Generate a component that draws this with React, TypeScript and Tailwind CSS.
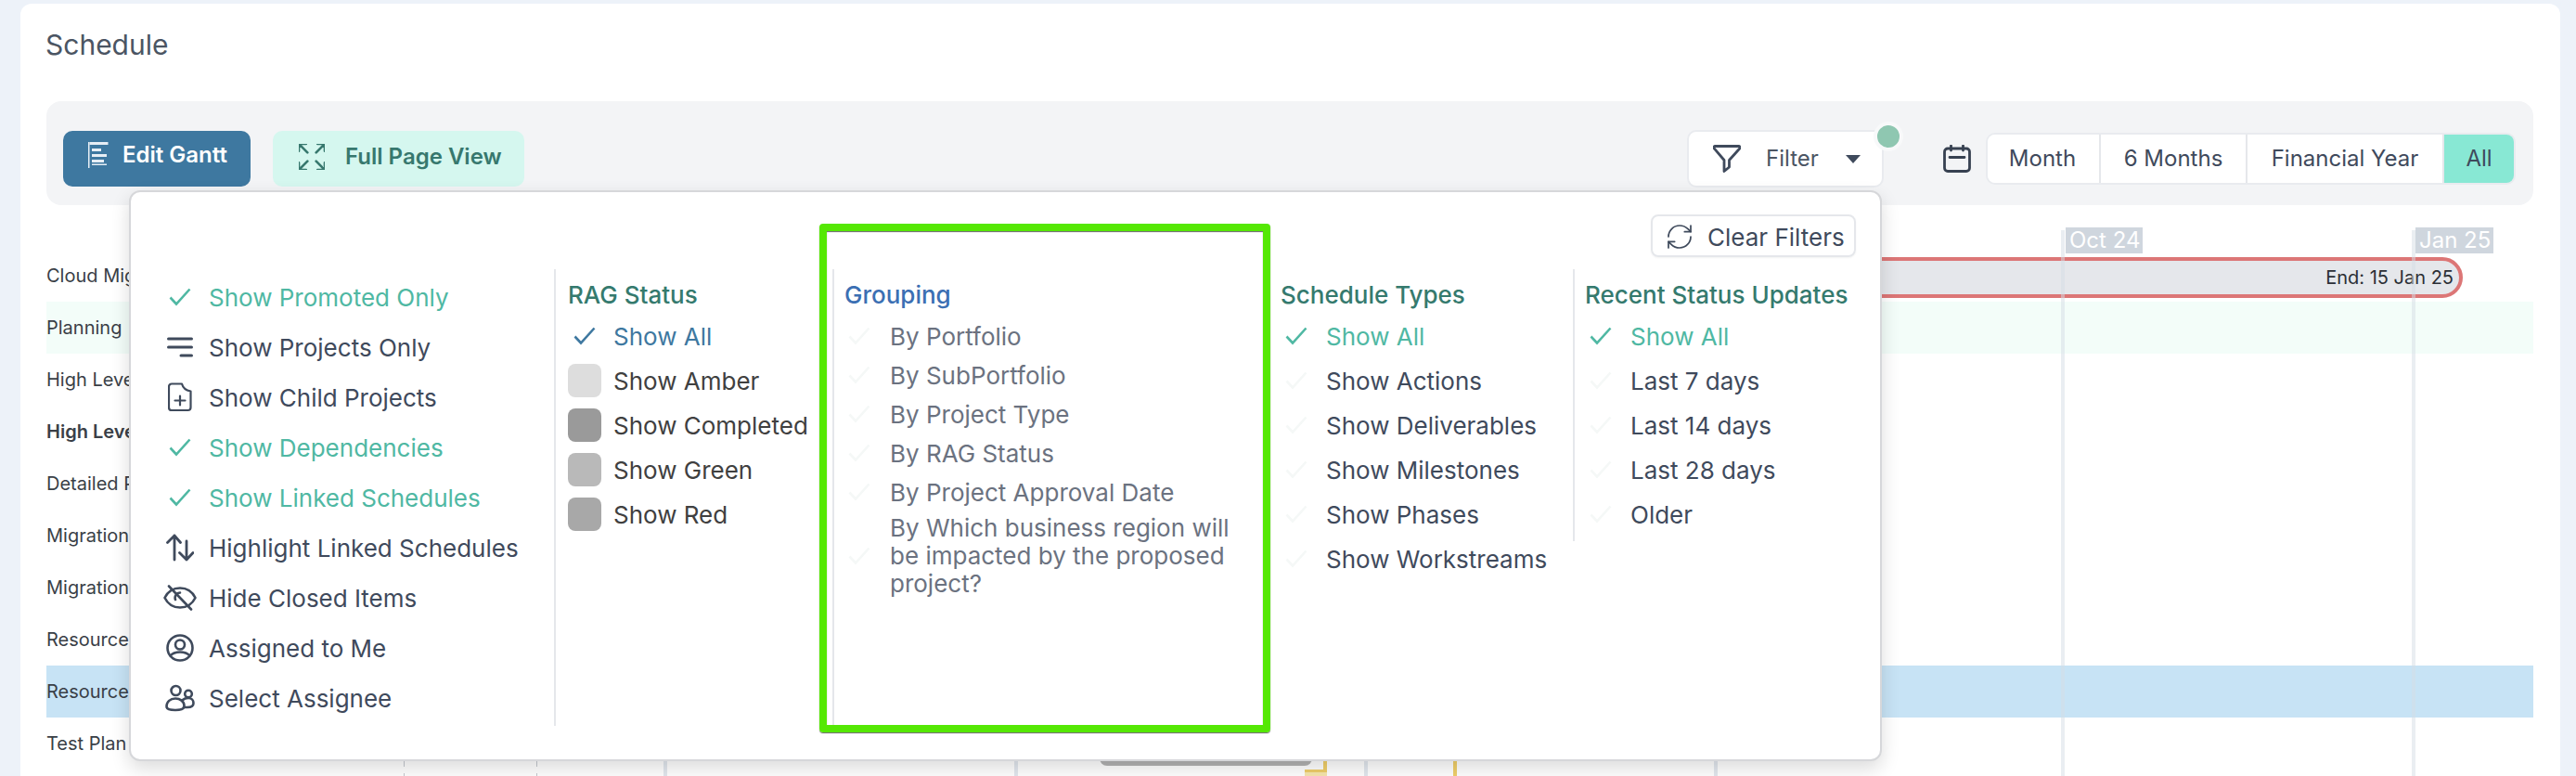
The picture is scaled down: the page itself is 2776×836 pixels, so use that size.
import React from "react";
import { RefreshCw } from "lucide-react";

const font = { fontFamily: "Inter, 'Noto Sans', sans-serif" };

function Check({ tone }: { tone: "teal" | "blue" | "faint" }) {
  const cls =
    tone === "teal" ? "text-[#4fb8a3]" : tone === "blue" ? "text-[#3e78a0]" : "text-[#f5f8f7]";
  return (
    <svg viewBox="0 0 24 20" className={`w-[24px] h-[20px] ${cls}`} fill="none" stroke="currentColor" strokeWidth="2.6">
      <polyline points="1.5,10.5 8,17.5 22.5,1.5" />
    </svg>
  );
}

const stroke = { fill: "none", stroke: "currentColor", strokeLinecap: "round" as const, strokeLinejoin: "round" as const };

function LinesIcon() {
  return (
    <svg viewBox="0 0 28 24" className="w-[28px] h-[24px]" {...stroke} strokeWidth="3">
      <path d="M1.5 3h25M1.5 12h25M15 21h11.5" />
    </svg>
  );
}
function FileIcon() {
  return (
    <svg viewBox="0 0 26 32" className="w-[26px] h-[32px]" {...stroke} strokeWidth="2.2">
      <path d="M4 1.5h11c1 4 4 7 9.5 8V27a3 3 0 0 1-3 3H4a3 3 0 0 1-3-3V4.5a3 3 0 0 1 3-3z" />
      <path d="M13 14.5v10M7.5 19.5h11" />
    </svg>
  );
}
function SwapIcon() {
  return (
    <svg viewBox="0 0 30 30" className="w-[30px] h-[30px]" {...stroke} strokeWidth="2.8">
      <path d="M9 28V2M1.5 9.5 9 2l6.5 7.5M22 8v20M14.5 20.5 22 28l7-7.5" />
    </svg>
  );
}
function EyeOffIcon() {
  return (
    <svg viewBox="0 0 36 28" className="w-[36px] h-[28px]" {...stroke} strokeWidth="2.6">
      <path d="M1.5 14C5 7 11 3.5 18 3.5S31 7 34.5 14C31 21 25 24.5 18 24.5S5 21 1.5 14z" />
      <path d="M18 8.5a5.5 5.5 0 0 0-5 7.5M6 1.5 30 26.5" />
    </svg>
  );
}
function UserCircleIcon() {
  return (
    <svg viewBox="0 0 30 30" className="w-[30px] h-[30px]" {...stroke} strokeWidth="2.6">
      <circle cx="15" cy="15" r="13.5" />
      <circle cx="15" cy="11.5" r="5" />
      <path d="M4.5 23.5C7 20.5 10.5 19.5 15 19.5s8 1 10.500 4" />
    </svg>
  );
}
function UsersIcon() {
  return (
    <svg viewBox="0 0 32 30" className="w-[32px] h-[30px]" {...stroke} strokeWidth="2.6">
      <circle cx="11.500" cy="7" r="5" />
      <circle cx="25" cy="10.500" r="3.800" />
      <path d="M1.500 24c0-5 4-8.500 9.500-8.500 5 0 9.500 3 9.500 8 0 3.500-3 4.500-9.500 4.500S1.500 27 1.500 24z" />
      <path d="M19 17c1.500-1.500 3.500-2 6-2 3.500 0 5.500 2.500 5.500 5.500S28 25 24 25h-4" />
    </svg>
  );
}

function LeftRow({ label, active, icon }: { label: string; active?: boolean; icon?: React.ReactNode }) {
  return (
    <div className="h-[54px] flex items-center">
      <div className="w-[85px] flex justify-center items-center pl-[27px] pr-[4px] text-[#3f4a5c]">
        {active ? <Check tone="teal" /> : icon}
      </div>
      <span className={`text-[26px] ${active ? "text-[#4fb8a3]" : "text-[#3f4a5c]"}`}>{label}</span>
    </div>
  );
}

function Heading({ children, blue }: { children: React.ReactNode; blue?: boolean }) {
  return (
    <div className={`h-[48px] pt-[6px] flex items-center text-[26px] font-medium whitespace-nowrap ${blue ? "text-[#3b6fb3]" : "text-[#357a6e]"}`}>
      {children}
    </div>
  );
}

function CheckRow({ label, active }: { label: string; active?: boolean }) {
  return (
    <div className="h-[48px] flex items-center whitespace-nowrap">
      <div className="w-[49px] pl-[5px] flex items-center">
        <Check tone={active ? "teal" : "faint"} />
      </div>
      <span className={`text-[26px] ${active ? "text-[#4fb8a3]" : "text-[#3f4a5c]"}`}>{label}</span>
    </div>
  );
}

function RagRow({ label, swatch }: { label: string; swatch: string }) {
  return (
    <div className="h-[48px] flex items-center whitespace-nowrap">
      <div className={`w-[36px] h-[36px] rounded-[8px] mr-[13px] ${swatch}`} />
      <span className="text-[26px] text-[#404040]">{label}</span>
    </div>
  );
}

function GroupRow({ label }: { label: string }) {
  return (
    <div className="h-[42px] flex items-center">
      <div className="w-[49px] pl-[4px] flex items-center">
        <Check tone="faint" />
      </div>
      <span className="text-[26px] text-[#6b7280]">{label}</span>
    </div>
  );
}

const rows = [
  { t: "Cloud Migration", c: "" },
  { t: "Planning", c: "bg-[#f3fdf9]" },
  { t: "High Level", c: "" },
  { t: "High Level", c: "font-semibold" },
  { t: "Detailed Plan", c: "" },
  { t: "Migration", c: "" },
  { t: "Migration", c: "" },
  { t: "Resource", c: "" },
  { t: "Resource", c: "bg-[#c7e3f5]" },
  { t: "Test Plan", c: "" },
];

const segments = [
  { t: "Month", c: "w-[122px] pr-[2px] border-r-2 border-[#e5e7eb] bg-white" },
  { t: "6 Months", c: "w-[158px] border-r-2 border-[#e5e7eb] bg-white" },
  { t: "Financial Year", c: "w-[212px] border-r-2 border-[#e5e7eb] bg-white" },
  { t: "All", c: "flex-1 bg-[#88e8d4]" },
];

export default function App() {
  return (
    <div style={font} className="h-[836px] overflow-hidden bg-[#edf2f9] pt-[4px] pl-[22px] pr-[17px]">
      <div className="relative h-[832px] bg-white rounded-t-[12px] pl-[28px] pr-[29px]">
        <div className="pt-[26px] h-[62px] text-[30px] leading-[36px] text-[#4b5563] -ml-[1px]">Schedule</div>
        <div className="h-[43px]" />

        {/* toolbar */}
        <div className="h-[112px] bg-[#f3f4f6] rounded-[16px] pt-[31px] pl-[18px] pr-[19px] flex items-start">
          <div className="h-[60px] mt-[1px] w-[202px] bg-[#3e78a0] rounded-[10px] flex items-center pl-[27px] pb-[8px] text-white">
            <svg viewBox="0 0 22 28" className="w-[22px] h-[28px] mr-[15px]" fill="#e6eef5">
              <rect x="0" y="0" width="1.500" height="28" />
              <rect x="1.500" y="0" width="20" height="3" />
              <rect x="4" y="7" width="10" height="3" />
              <rect x="4" y="13" width="16" height="3" />
              <rect x="4" y="19" width="13" height="3" />
              <rect x="4" y="23.500" width="16" height="1.500" />
            </svg>
            <span className="text-[24px] font-semibold">Edit Gantt</span>
          </div>
          <div className="h-[60px] mt-[1px] ml-[24px] w-[271px] bg-[#d5f7ef] rounded-[10px] flex items-center pl-[28px] pb-[4px] text-[#37786e]">
            <svg viewBox="3 3 18 18" className="w-[28px] h-[28px] mr-[22px]" {...stroke} strokeWidth="1.700">
              <path d="m15 15 6 6M15 9l6-6M21 16v5h-5M21 8V3h-5M3 16v5h5M3 21l6-6M3 8V3h5M3 3l6 6" />
            </svg>
            <span className="text-[24px] font-semibold">Full Page View</span>
          </div>

          <div className="relative ml-auto h-[62px] w-[212px] bg-white border-2 border-[#e9ebef] rounded-[10px] flex items-center pl-[26px] text-[#3f4a5c]">
            <svg viewBox="0 0 30 30" className="w-[30px] h-[30px]" {...stroke} strokeWidth="2.800">
              <path d="M2.500 1.500h25a1.500 1.500 0 0 1 1 2.700L17.500 16.500v7.500L12 28.500v-12L1.500 4.200a1.500 1.500 0 0 1 1-2.700z" />
            </svg>
            <span className="ml-[27px] text-[24px] text-[#4b5563]">Filter</span>
            <svg viewBox="0 0 16 9" className="ml-[29px] w-[16px] h-[9px]" fill="currentColor">
              <path d="M0 0h16L8 9z" />
            </svg>
            <div className="absolute -right-[23px] -top-[11px] w-[32px] h-[32px] rounded-full bg-[#8fc7b1] border-[4px] border-[#f8f9fa]" />
          </div>

          <svg viewBox="0 0 30 30" className="w-[30px] h-[30px] ml-[64px] mt-[16px] text-[#374151]" {...stroke} strokeWidth="2.800">
            <rect x="1.500" y="4" width="27" height="24.500" rx="3.500" />
            <path d="M8.500 1v5M21.500 1v5M7 13.500h16" />
          </svg>

          <div className="ml-[16px] mt-[3px] w-[571px] h-[56px] border-2 border-[#e9ebef] rounded-[10px] overflow-hidden flex">
            {segments.map((s) => (
              <div key={s.t} className={`h-full flex items-center justify-center text-[24px] text-[#3f4a5c] ${s.c}`}>
                {s.t}
              </div>
            ))}
          </div>
        </div>

        {/* chart */}
        <div className="relative h-[615px]">
          <div className="h-[48px]" />
          {rows.map((r, i) => (
            <div key={i} className={`h-[56px] flex items-center text-[20px] text-[#3a3f47] whitespace-nowrap relative ${r.c}`}>
              <span>{r.t}</span>
              {i === 0 && (
                <div className="ml-auto mr-[76px] mt-[4px] w-[1400px] h-[44px] shrink-0 rounded-full border-[4px] border-[#dc7676] bg-[#e5e7eb] flex items-center justify-end pr-[6px] text-[20px] text-[#2b2f36]">
                  End: 15 Jan 25
                </div>
              )}
            </div>
          ))}

          {/* grid lines */}
          <div className="absolute top-[27px] bottom-0 left-[2171px] w-[4px] bg-[#d5dde5]/50" />
          <div className="absolute top-[27px] bottom-0 left-[2549px] w-[4px] bg-[#d5dde5]/50" />
          <div className="absolute top-[560px] bottom-0 left-[665px] w-[4px] bg-[#e2e7ee]" />
          <div className="absolute top-[560px] bottom-0 left-[1043px] w-[4px] bg-[#e2e7ee]" />
          <div className="absolute top-[560px] bottom-0 left-[1420px] w-[4px] bg-[#e2e7ee]" />
          <div className="absolute top-[560px] bottom-0 left-[1797px] w-[4px] bg-[#e2e7ee]" />
          <div className="absolute top-[560px] h-[45px] left-[385px] w-[1px] bg-[#c4c8ce]" />
          <div className="absolute top-[612px] h-[3px] left-[385px] w-[1px] bg-[#c4c8ce]" />
          <div className="absolute top-[560px] h-[45px] left-[528px] w-[1px] bg-[#c4c8ce]" />
          <div className="absolute top-[612px] h-[3px] left-[528px] w-[1px] bg-[#c4c8ce]" />

          {/* bar and links peeking from under the popover */}
          <div className="absolute top-[560px] h-[44px] left-[1135px] w-[229px] bg-[#b3b3b3] rounded-b-[8px]" />
          <div className="absolute top-[560px] h-[52px] left-[1376px] w-[4px] bg-[#f0cf6a]" />
          <div className="absolute top-[608px] h-[4px] left-[1356px] w-[24px] bg-[#f0cf6a]" />
          <div className="absolute top-[611px] h-[4px] left-[1356px] w-[24px] bg-[#f7e6ad]" />
          <div className="absolute top-[560px] bottom-0 left-[1516px] w-[4px] bg-[#f0cf6a]" />

          {/* month labels */}
          <div className="absolute top-[24px] h-[28px] left-[2176px] w-[83px] bg-[#cfd6de] text-white text-[24px] leading-[28px] pl-[4px]">Oct 24</div>
          <div className="absolute top-[24px] h-[28px] left-[2553px] w-[84px] bg-[#cfd6de] text-white text-[24px] leading-[28px] pl-[4px]">Jan 25</div>
        </div>

        {/* popover */}
        <div className="absolute left-[117px] top-[201px] w-[1889px] h-[615px] bg-white rounded-[12px] border-2 border-[#d6d7da] shadow-[0_8px_20px_rgba(0,0,0,0.14)]">
          <div className="flex justify-end pt-[24px] pr-[26px]">
            <div className="h-[46px] w-[221px] border-2 border-[#e5e7eb] rounded-[8px] flex items-center pl-[13px] pt-[2px] text-[#3f4a5c] shadow-[0_1px_2px_rgba(0,0,0,0.05)]">
              <RefreshCw size={32} strokeWidth={1.300} className="shrink-0" />
              <span className="ml-[14px] text-[26px] whitespace-nowrap">Clear Filters</span>
            </div>
          </div>
          <div className="mt-[13px] flex -ml-[1px] h-[492px]">
            <div className="w-[459px] border-r-2 border-[#e5e7eb] pt-[3px]">
              <LeftRow label="Show Promoted Only" active />
              <LeftRow label="Show Projects Only" icon={<LinesIcon />} />
              <LeftRow label="Show Child Projects" icon={<FileIcon />} />
              <LeftRow label="Show Dependencies" active />
              <LeftRow label="Show Linked Schedules" active />
              <LeftRow label="Highlight Linked Schedules" icon={<SwapIcon />} />
              <LeftRow label="Hide Closed Items" icon={<EyeOffIcon />} />
              <LeftRow label="Assigned to Me" icon={<UserCircleIcon />} />
              <LeftRow label="Select Assignee" icon={<UsersIcon />} />
            </div>
            <div className="w-[298px] pl-[13px]">
              <Heading>RAG Status</Heading>
              <div className="h-[48px] flex items-center">
                <div className="w-[49px] pl-[6px] flex items-center">
                  <Check tone="blue" />
                </div>
                <span className="text-[26px] text-[#3e78a0]">Show All</span>
              </div>
              <RagRow label="Show Amber" swatch="bg-[#dddddd]" />
              <RagRow label="Show Completed" swatch="bg-[#9a9a9a]" />
              <RagRow label="Show Green" swatch="bg-[#b9b9b9]" />
              <RagRow label="Show Red" swatch="bg-[#a8a8a8]" />
            </div>
            <div className="w-[470px] border-l-2 border-[#e5e7eb] pl-[11px]">
              <Heading blue>Grouping</Heading>
              <div className="h-[3px]" />
              <GroupRow label="By Portfolio" />
              <GroupRow label="By SubPortfolio" />
              <GroupRow label="By Project Type" />
              <GroupRow label="By RAG Status" />
              <GroupRow label="By Project Approval Date" />
              <div className="flex items-center mt-[3px]">
                <div className="w-[49px] pl-[4px] flex items-center">
                  <Check tone="faint" />
                </div>
                <span className="w-[380px] text-[26px] leading-[30px] text-[#6b7280]">
                  By Which business region will be impacted by the proposed project?
                </span>
              </div>
            </div>
            <div className="w-[328px] pl-[13px]">
              <Heading>Schedule Types</Heading>
              <CheckRow label="Show All" active />
              <CheckRow label="Show Actions" />
              <CheckRow label="Show Deliverables" />
              <CheckRow label="Show Milestones" />
              <CheckRow label="Show Phases" />
              <CheckRow label="Show Workstreams" />
            </div>
            <div className="self-start border-l-2 border-[#e5e7eb] pl-[11px] pb-[5px]">
              <Heading>Recent Status Updates</Heading>
              <CheckRow label="Show All" active />
              <CheckRow label="Last 7 days" />
              <CheckRow label="Last 14 days" />
              <CheckRow label="Last 28 days" />
              <CheckRow label="Older" />
            </div>
          </div>

          {/* green highlight frame */}
          <div className="absolute left-[742px] top-[34px] w-[486px] h-[548px] border-[8px] border-[#55e804] rounded-[4px] shadow-[0_1px_1px_#666,inset_0_1px_1px_#666]" />
        </div>
      </div>
    </div>
  );
}
